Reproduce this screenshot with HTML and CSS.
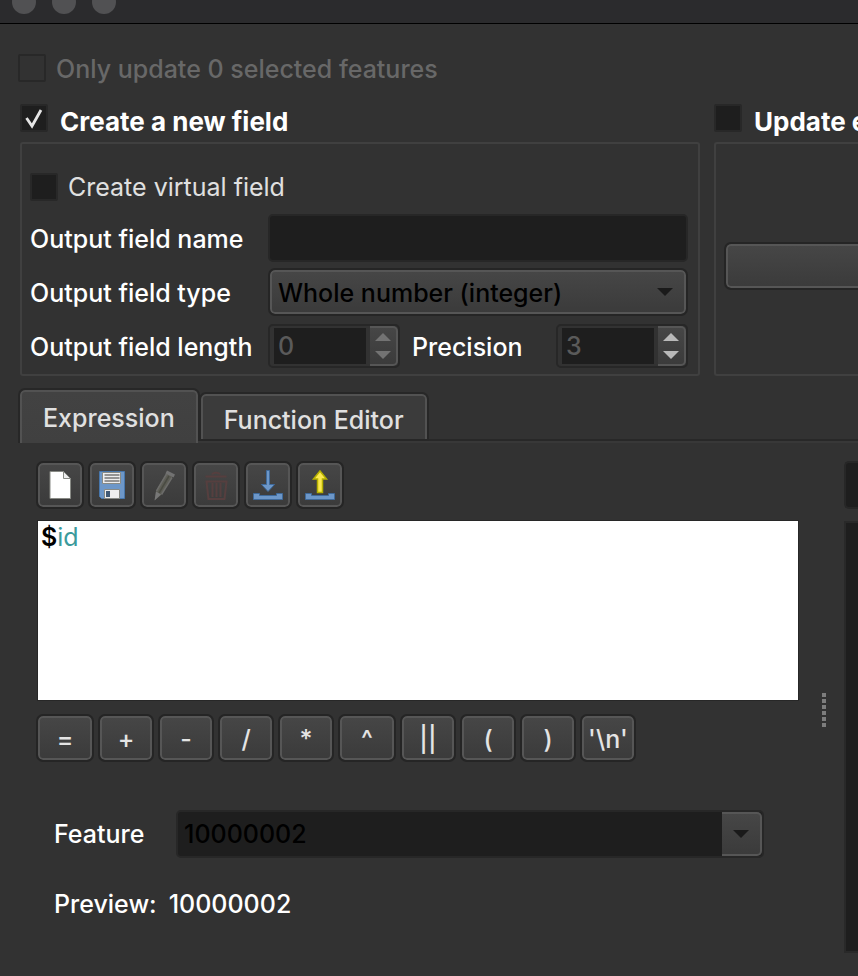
FILE: index.html
```html
<!DOCTYPE html>
<html lang="en">
<head>
<meta charset="utf-8">
<title>Field Calculator</title>
<link rel="stylesheet" href="styles.css">
</head>
<body>
<header class="titlebar"><i class="light"></i><i class="light"></i><i class="light"></i></header>
<main class="dialog">
  <label class="check-row only-selected"><input type="checkbox" class="check" disabled><span>Only update 0 selected features</span></label>

  <div class="columns">
    <section class="create">
      <label class="check-row group-title"><input type="checkbox" class="check" checked><span>Create a new field</span></label>
      <div class="group">
        <label class="check-row virtual"><input type="checkbox" class="check"><span>Create virtual field</span></label>
        <div class="fields">
          <label for="name">Output field name</label>
          <input id="name" class="line-edit" type="text">
          <label for="type">Output field type</label>
          <div class="combo">
            <select id="type" class="raised"><option>Whole number (integer)</option></select>
            <svg class="combo-arrow" width="16" height="8" viewBox="0 0 16 8"><path d="M0 0h16L8 8z"/></svg>
          </div>
          <label for="length">Output field length</label>
          <div class="numbers">
            <div class="spin spin-off">
              <input id="length" type="text" value="0" disabled>
              <button type="button" class="stepper" aria-label="Step length"><svg width="16" height="26" viewBox="0 0 16 26"><path d="M0 8h16L8 0zM0 18h16l-8 8z"/></svg></button>
            </div>
            <label for="precision">Precision</label>
            <div class="spin">
              <input id="precision" type="text" value="3" disabled>
              <button type="button" class="stepper" aria-label="Step precision"><svg width="16" height="26" viewBox="0 0 16 26"><path d="M0 8h16L8 0zM0 18h16l-8 8z"/></svg></button>
            </div>
          </div>
        </div>
      </div>
    </section>
    <section class="update">
      <label class="check-row group-title"><input type="checkbox" class="check"><span>Update e</span></label>
      <div class="group group-cut"><button type="button" class="raised field-pick" aria-label="Field"></button></div>
    </section>
  </div>

  <nav class="tabs">
    <button type="button" class="tab tab-on">Expression</button>
    <div class="tab-rest"><button type="button" class="tab">Function Editor</button></div>
  </nav>

  <div class="workspace">
    <section class="editor-side">
      <div class="toolbar">
        <button type="button" class="raised tool" aria-label="New"><svg width="32" height="32" viewBox="0 0 32 32"><path d="M6 2.500h13.500l7 7V29.500H6z" fill="#fff" stroke="#888a85"/><path d="M19.500 2.500v7h7z" fill="#eee" stroke="#888a85"/></svg></button>
        <button type="button" class="raised tool" aria-label="Save"><svg width="32" height="32" viewBox="0 0 32 32"><path d="M3.500 2.500h25v27h-23l-2-2z" fill="#6d97c8" stroke="#4776ab"/><path d="M6.500 3.500h18v11h-18z" fill="#eee" stroke="#888a85"/><path d="M8.500 6h15M8.500 9h15M8.500 12h15" stroke="#777" stroke-width="1.500"/><path d="M8.500 20.500h15v9h-15z" fill="#eee" stroke="#888a85"/><path d="M10 22h4v6h-4z" fill="#415a75"/></svg></button>
        <button type="button" class="raised tool" aria-label="Edit" disabled><svg width="32" height="32" viewBox="0 0 32 32"><path d="M18.500 4l6 3.500L13 26l-6 5 1-9z" fill="#5d5d55"/><path d="M18.500 5L8.500 22M24 8.500L13.500 25.500" stroke="#6c6c6a" stroke-width="1.500"/><path d="M21 7L11 24" stroke="#4a4b43" stroke-width="1.500"/><path d="M19 1.500l8 4-1.500 3-8-4z" fill="#727272"/><path d="M6.500 31.500l1.500-9 5 3z" fill="#777"/></svg></button>
        <button type="button" class="raised tool" aria-label="Delete" disabled><svg width="32" height="32" viewBox="0 0 32 32" fill="none" stroke="#563f3f" stroke-width="2"><path d="M5.500 7.500h21M12 5.500c1-2.500 7-2.500 8 0"/><path d="M6.500 12.500h20l-2 17.500h-16z"/><path d="M12.500 14v14M16.500 14v14M20.500 14v14"/></svg></button>
        <button type="button" class="raised tool" aria-label="Import"><svg width="32" height="32" viewBox="0 0 32 32" fill="#6d97c8" stroke="#3f6a9b"><path d="M14.500 1.500h3v14h5l-6.500 7-6.500-7h5z"/><path d="M1.500 24.500h6v2h17v-2h6v6h-29z"/></svg></button>
        <button type="button" class="raised tool" aria-label="Export"><svg width="32" height="32" viewBox="0 0 32 32" fill="#6d97c8" stroke="#3f6a9b"><path d="M16 2l6.500 8h-4v13.500h-5V10h-4z" fill="#fce94f" stroke="#b5b000" stroke-width="1.500"/><path d="M1.500 24.500h6v2h17v-2h6v6h-29z"/></svg></button>
      </div>
      <div class="code" contenteditable="true" spellcheck="false" role="textbox" aria-label="Expression"><span class="dollar">$</span><span class="name">id</span></div>
      <div class="operators">
        <button type="button" class="raised op op-wide">=</button>
        <button type="button" class="raised op">+</button>
        <button type="button" class="raised op">-</button>
        <button type="button" class="raised op">/</button>
        <button type="button" class="raised op">*</button>
        <button type="button" class="raised op op-wide">^</button>
        <button type="button" class="raised op">||</button>
        <button type="button" class="raised op">(</button>
        <button type="button" class="raised op">)</button>
        <button type="button" class="raised op">'\n'</button>
      </div>
      <div class="feature">
        <label for="feature">Feature</label>
        <div class="feature-combo">
          <input id="feature" type="text" value="10000002">
          <button type="button" class="drop" aria-label="Choose feature"><svg width="16" height="8" viewBox="0 0 16 8"><path d="M0 0h16L8 8z"/></svg></button>
        </div>
      </div>
      <p class="preview"><span>Preview:</span><output>10000002</output></p>
    </section>
    <div class="grip"><i></i><i></i><i></i><i></i><i></i><i></i></div>
    <section class="functions">
      <input class="line-edit search" type="text" aria-label="Search">
      <div class="list"></div>
    </section>
  </div>
</main>
</body>
</html>
```
FILE: styles.css
```css
* { box-sizing: border-box; }
body {
  margin: 0;
  min-height: 100vh;
  display: flex;
  flex-direction: column;
  overflow: hidden;
  background: #323232;
  color: #fff;
  font: 500 25px/30px Inter, "Liberation Sans", sans-serif;
}
button, input, select { font: inherit; color: inherit; margin: 0; padding: 0; }
svg { display: block; }

.titlebar {
  display: flex;
  gap: 16px;
  height: 24px;
  padding-left: 12px;
  overflow: hidden;
  background: #2b2b2d;
  border-bottom: 1px solid #000;
}
.light {
  flex: none;
  width: 24px;
  height: 24px;
  margin-top: -10px;
  border-radius: 50%;
  background: #515153;
}

.dialog { flex: 1; display: flex; flex-direction: column; padding-top: 30px; }

.check-row { display: flex; align-items: center; gap: 10px; height: 30px; white-space: nowrap; }
.check {
  appearance: none;
  flex: none;
  width: 28px;
  height: 28px;
  border: 2px solid #282828;
  border-radius: 2px;
  background: #1e1e1e;
}
.check:disabled { background: #323232; }
.check:checked {
  background: #1e1e1e url('data:image/svg+xml,<svg xmlns="http://www.w3.org/2000/svg" viewBox="0 0 24 24"><path d="M4.500 12l5.500 8L19 4" fill="none" stroke="%23e4e4e4" stroke-width="2.800"/></svg>');
}
.only-selected { padding-left: 18px; color: #686868; }
.only-selected .check { align-self: flex-start; }

.columns { display: grid; grid-template-columns: 1fr 144px; gap: 14px; padding-left: 20px; margin-top: 20px; }
.create, .update { min-width: 0; }
.group-title { height: 38px; align-items: flex-start; gap: 12px; font-size: 26px; font-weight: 700; }
.group-title span { padding-top: 3px; }
.group { height: 234px; border: 2px solid #404040; border-radius: 3px; padding: 28px 10px 6px 8px; }
.group-cut { border-right: 0; border-radius: 3px 0 0 3px; padding: 100px 0 0 8px; }
.virtual { color: #e0e0e0; font-weight: 400; }
.fields { display: grid; grid-template-columns: 238px 1fr; row-gap: 6px; margin-top: 12px; align-items: center; white-space: nowrap; }
.fields label { padding-top: 2px; }

.line-edit {
  width: 100%;
  height: 48px;
  padding: 0 8px;
  border: 2px solid #272727;
  border-radius: 5px;
  background: #1e1e1e;
}
.raised {
  border: 2px solid #565656;
  border-radius: 5px;
  outline: 2px solid #252525;
  background: linear-gradient(#464646, #3b3b3b);
}
.combo { position: relative; padding: 2px; }
.combo select { appearance: none; display: block; width: 100%; height: 44px; padding: 2px 6px 0; color: #000; }
.combo-arrow { position: absolute; right: 15px; top: 20px; fill: #1a1a1a; pointer-events: none; }

.numbers { display: grid; grid-template-columns: 132px 1fr 132px; align-items: center; height: 48px; }
.numbers > label { padding-left: 12px; }
.spin { display: flex; height: 44px; border: 2px solid #272727; border-radius: 5px; background: #323232; }
.spin input {
  flex: 1;
  min-width: 0;
  margin: 2px 4px 2px 4px;
  padding-left: 4px;
  border: 0;
  background: #1e1e1e;
  color: #5a5a5a;
}
.stepper, .drop {
  display: flex;
  align-items: center;
  justify-content: center;
  width: 28px;
  border: 2px solid #565656;
  border-left: 0;
  border-radius: 0 5px 5px 0;
  background: linear-gradient(#464646, #3b3b3b);
}
.stepper svg { fill: #b9b9b9; }
.spin-off .stepper svg { fill: #737373; }
.field-pick { display: block; width: 100%; height: 44px; border-right: 0; border-radius: 5px 0 0 5px; margin-left: 2px; }

.tabs { display: flex; align-items: flex-end; margin-top: 14px; padding-left: 20px; }
.tab {
  display: block;
  height: 45px;
  padding: 4px 21px 0;
  border: 2px solid #525252;
  border-bottom: 0;
  border-radius: 5px 5px 0 0;
  outline: 2px solid #272727;
  background: #3b3b3b;
  color: #e0e0e0;
}
.tab-on { height: 53px; padding: 0 21px; background: linear-gradient(#424242, #404040); }
.tab-rest {
  flex: 1;
  margin-bottom: 2px;
  padding-left: 3px;
  border-bottom: 2px solid #282828;
  box-shadow: 0 2px #383838;
}

.workspace {
  position: relative;
  flex: 1;
  display: grid;
  grid-template-columns: 1fr 45px 14px;
  padding: 18px 0 23px 36px;
  background: #323232;
}
.editor-side { min-width: 0; }
.toolbar, .operators { display: flex; gap: 8px; padding: 2px; }
.tool { display: flex; align-items: center; justify-content: center; width: 44px; height: 44px; }
.code {
  height: 181px;
  margin: 11px 0 13px 1px;
  padding: 1px 3px;
  border: 1px solid #272727;
  outline: 0;
  background: #fff;
}
.dollar { color: #000; font-weight: 600; }
.name { color: #3b9a9c; font-weight: 400; }
.op { width: 52px; height: 44px; padding-top: 2px; color: #e4e4e4; white-space: nowrap; }
.op-wide { width: 54px; }
.feature { display: grid; grid-template-columns: 122px 1fr; align-items: center; margin: 48px 35px 0 18px; }
.feature-combo { display: flex; height: 48px; border: 2px solid #272727; border-radius: 5px; background: #1e1e1e; }
.feature-combo input { flex: 1; min-width: 0; padding-left: 6px; border: 0; background: none; color: #000; }
.drop { width: 40px; }
.drop svg { fill: #1a1a1a; }
.preview { display: flex; gap: 12px; margin: 31px 0 0 18px; }
.grip { display: flex; flex-direction: column; gap: 2px; align-self: center; align-items: center; padding: 6px 0 0 4px; }
.grip i { width: 4px; height: 4px; background: #7d7d7d; }
.functions { display: flex; flex-direction: column; gap: 12px; overflow: hidden; }
.search { border-right: 0; border-radius: 5px 0 0 5px; }
.list { flex: 1; border: 2px solid #292929; border-right: 0; background: #1e1e1e; }
```
